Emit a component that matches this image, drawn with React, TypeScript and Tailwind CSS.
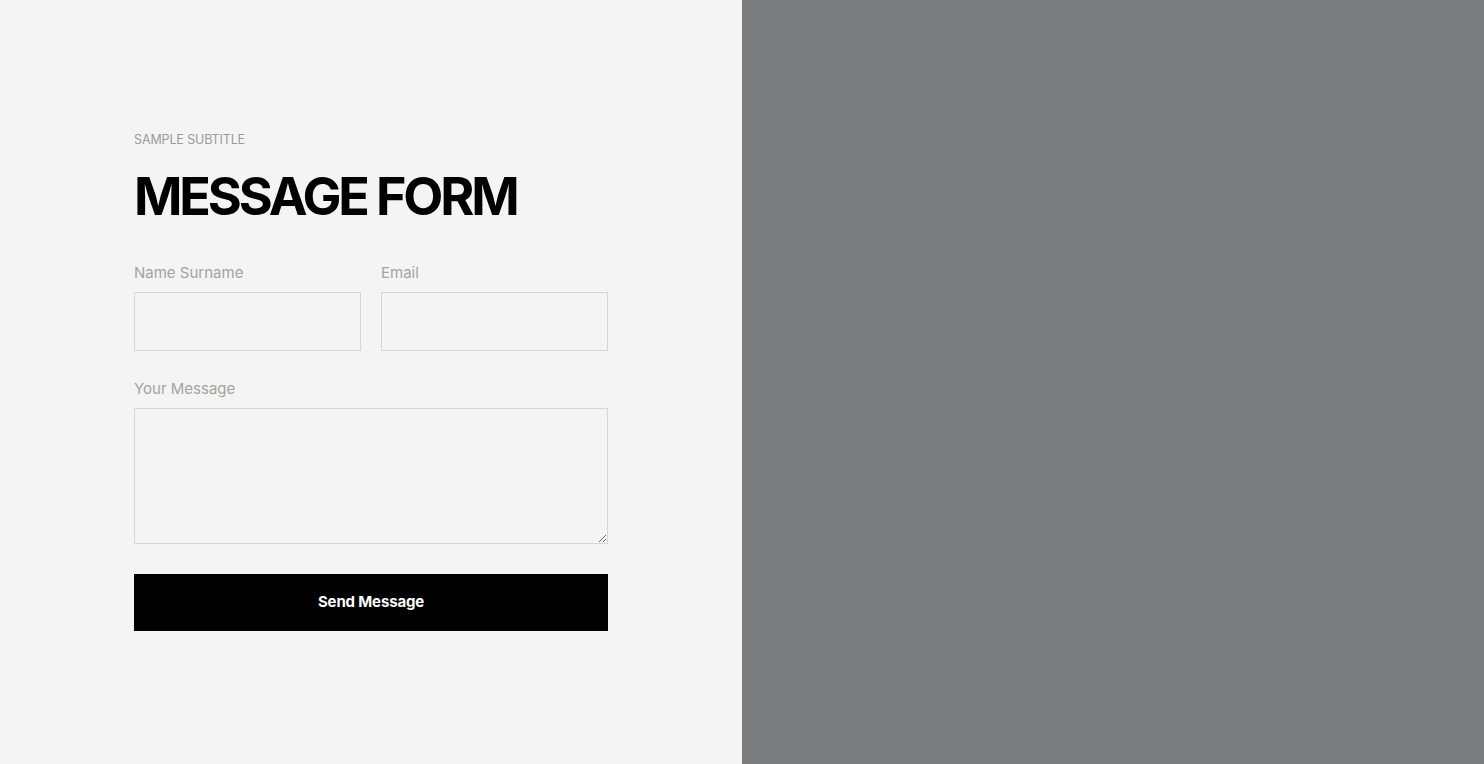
import React from 'react';

const App: React.FC = () => {
  return (
    <div className="flex h-[764px] w-full font-['Inter',sans-serif]">
      <div className="w-[742px] shrink-0 bg-[#f4f4f4] pl-[134px] pt-[130px]">
        <div className="w-[474px]">
          <span className="block text-[12.5px] leading-5 uppercase tracking-[-0.01em] text-[#9a9a9a]">Sample Subtitle</span>
          <h1 className="mt-[19px] text-[52px] font-bold leading-[56px] tracking-[-0.06em] text-black">MESSAGE FORM</h1>

          <div className="mt-[38px] grid grid-cols-2 gap-x-5">
            <div>
              <label className="block text-[15px] leading-5 text-[#a5a39f]">Name Surname</label>
              <input className="mt-[9px] block h-[59px] w-full border border-[#d6d6d6] bg-transparent outline-none" />
            </div>
            <div>
              <label className="block text-[15px] leading-5 text-[#a5a39f]">Email</label>
              <input className="mt-[9px] block h-[59px] w-full border border-[#d6d6d6] bg-transparent outline-none" />
            </div>
          </div>

          <div className="mt-[28px]">
            <label className="block text-[15px] leading-5 text-[#a5a39f]">Your Message</label>
            <textarea className="mt-[9px] block h-[136px] w-full border border-[#d6d6d6] bg-transparent outline-none" />
          </div>

          <button className="mt-[30px] flex h-[57px] w-full items-center justify-center bg-black text-[15px] font-bold tracking-[-0.01em] text-white">
            Send Message
          </button>
        </div>
      </div>
      <div className="flex-1 bg-[#7b7c7e]" />
    </div>
  );
};

export default App;
